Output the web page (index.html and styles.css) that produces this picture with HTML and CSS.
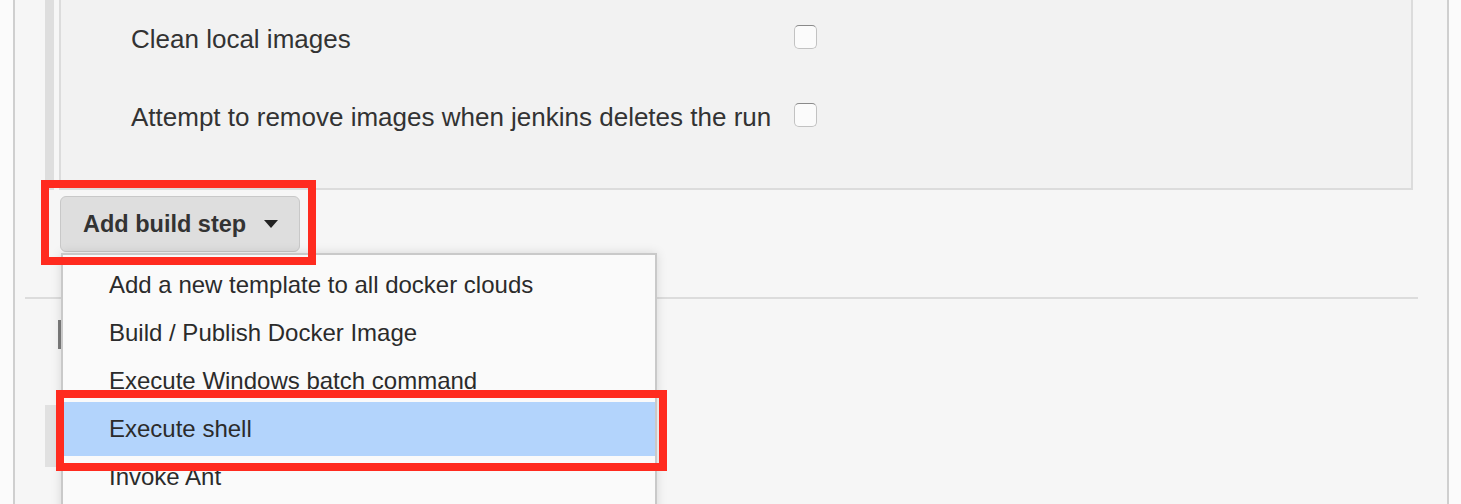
FILE: index.html
```html
<!DOCTYPE html>
<html>
<head>
<meta charset="utf-8">
<link rel="stylesheet" href="styles.css">
</head>
<body>
<div class="page">
  <div class="step">
    <div class="handle"></div>
    <div class="panel">
      <div class="row">
        <span class="label">Clean local images</span>
        <span class="checkbox"></span>
      </div>
      <div class="row">
        <span class="label">Attempt to remove images when jenkins deletes the run</span>
        <span class="checkbox"></span>
      </div>
    </div>
  </div>
  <div class="button-row">
    <button class="add-btn">Add build step <span class="caret"></span></button>
  </div>
  <div class="divider"></div>
  <div class="section-mark"></div>
  <div class="hidden-btn"></div>

  <div class="menu">
    <div class="item">Add a new template to all docker clouds</div>
    <div class="item">Build / Publish Docker Image</div>
    <div class="item">Execute Windows batch command</div>
    <div class="item active">Execute shell</div>
    <div class="item">Invoke Ant</div>
  </div>

  <div class="callout callout-btn"></div>
  <div class="callout callout-item"></div>
</div>
</body>
</html>
```

FILE: styles.css
```css
* { box-sizing: border-box; }
html, body {
  margin: 0;
  padding: 0;
  background: #fbfbfb;
  font-family: "Liberation Sans", Arial, Helvetica, sans-serif;
  color: #333;
  overflow: hidden;
}
.page {
  position: relative;
  margin-left: 13px;
  width: 1436px;
  height: 504px;
  background: #f6f6f6;
  border-left: 2px solid #cfcfcf;
  border-right: 2px solid #cfcfcf;
  overflow: hidden;
}
.step {
  display: flex;
  align-items: stretch;
  margin-left: 30px;
  margin-top: -10px;
}
.handle {
  width: 9px;
  background: #dedede;
  margin-right: 5px;
}
.panel {
  width: 1354px;
  background: #f2f2f2;
  border: 2px solid #dcdcdc;
  padding: 8px 0 32px 70px;
}
.row {
  display: grid;
  grid-template-columns: 663px 24px;
  align-items: center;
  height: 78px;
}
.label {
  font-size: 26px;
  line-height: 30px;
  color: #333;
  white-space: nowrap;
}
.checkbox {
  display: block;
  width: 23px;
  height: 24px;
  margin-top: -4px;
  border: 1px solid #c2c2c2;
  border-top-color: #8a8a8a;
  border-radius: 5px;
  background: #fbfbfb;
}
.button-row {
  margin-left: 45px;
  margin-top: 6px;
}
.add-btn {
  display: flex;
  align-items: center;
  height: 56px;
  width: 240px;
  padding: 0 0 0 22px;
  background: #dedede;
  border: 1px solid #c8c8c8;
  border-radius: 6px;
  font-family: inherit;
  font-size: 23.5px;
  font-weight: bold;
  color: #333;
}
.caret {
  display: inline-block;
  margin-left: 18px;
  width: 0;
  height: 0;
  border-left: 7px solid transparent;
  border-right: 7px solid transparent;
  border-top: 8px solid #222;
}
.divider {
  margin-left: 10px;
  margin-top: 45px;
  width: 1393px;
  height: 2px;
  background: #dcdcdc;
}
.section-mark {
  margin-left: 43px;
  margin-top: 21px;
  width: 3px;
  height: 29px;
  background: #7c7c7c;
}
.hidden-btn {
  margin-left: 30px;
  margin-top: 56px;
  width: 60px;
  height: 62px;
  background: #e1e1e1;
}
.menu {
  position: absolute;
  left: 46px;
  top: 253px;
  width: 596px;
  height: 300px;
  background: #fafafa;
  border: 2px solid #c9c9c9;
  box-shadow: 0 0 10px rgba(0, 0, 0, 0.13);
  padding-top: 6px;
}
.item {
  height: 48px;
  line-height: 48px;
  padding-left: 46px;
  font-size: 24px;
  color: #2b2b2b;
  white-space: nowrap;
}
.item.active {
  background: #b3d4fc;
  box-shadow: 0 -3px 0 #b3d4fc, 0 3px 0 #b3d4fc;
}
.callout {
  position: absolute;
  border: 8px solid #ff2b1f;
}
.callout-btn {
  left: 26px;
  top: 180px;
  width: 275px;
  height: 85px;
}
.callout-item {
  left: 41px;
  top: 390px;
  width: 611px;
  height: 81px;
}
```
